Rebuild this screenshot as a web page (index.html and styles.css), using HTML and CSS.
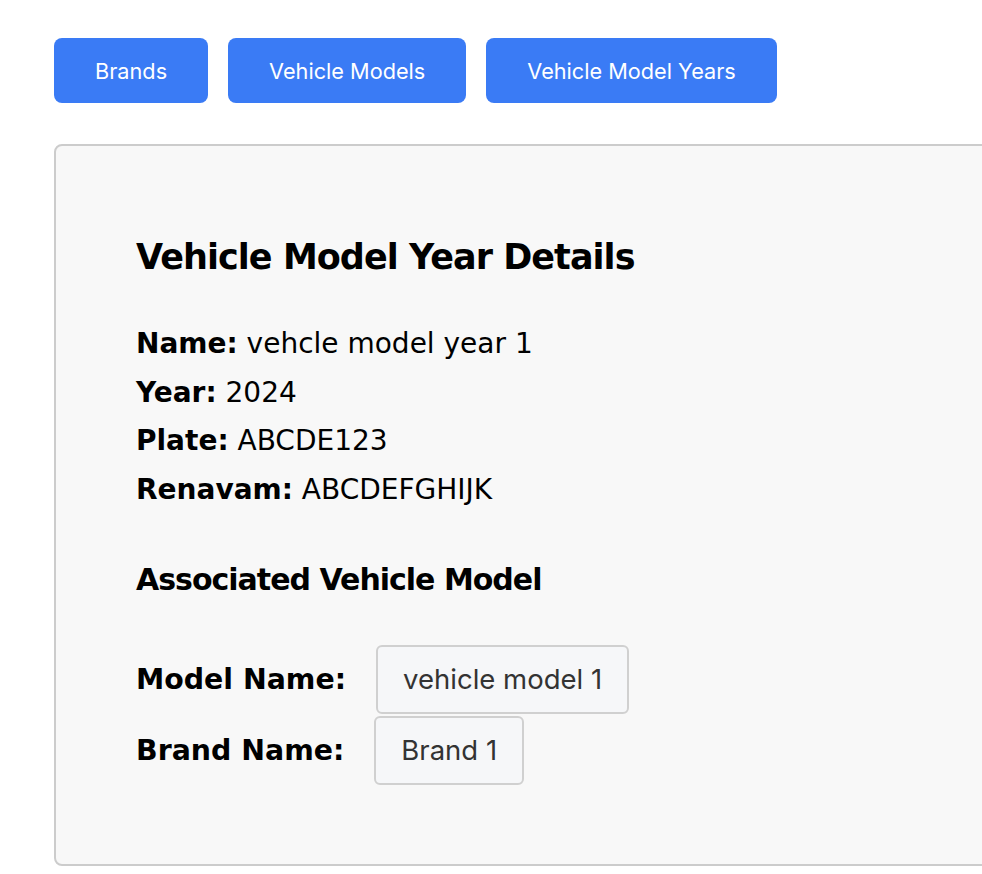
FILE: index.html
```html
<!DOCTYPE html>
<html>
<head>
<meta charset="utf-8">
<link rel="stylesheet" href="styles.css">
</head>
<body>
<nav class="nav">
  <button class="nav-btn">Brands</button>
  <button class="nav-btn">Vehicle Models</button>
  <button class="nav-btn">Vehicle Model Years</button>
</nav>
<section class="card">
  <h2 class="title">Vehicle Model Year Details</h2>
  <div class="fields">
    <div class="field"><b>Name:</b> vehcle model year 1</div>
    <div class="field"><b>Year:</b> 2024</div>
    <div class="field"><b>Plate:</b> ABCDE123</div>
    <div class="field"><b>Renavam:</b> ABCDEFGHIJK</div>
  </div>
  <h3 class="subtitle">Associated Vehicle Model</h3>
  <div class="assoc">
    <div class="assoc-row"><b class="assoc-label">Model Name:</b><span class="chip">vehicle model 1</span></div>
    <div class="assoc-row"><b class="assoc-label">Brand Name:</b><span class="chip">Brand 1</span></div>
  </div>
</section>
</body>
</html>
```
FILE: styles.css
```css
html, body {
  margin: 0;
  background: #ffffff;
  overflow: hidden;
}
body {
  padding: 38px 0 0 54px;
  font-family: "DejaVu Sans", Verdana, sans-serif;
  color: #000;
}
.nav {
  display: flex;
  gap: 20px;
}
.nav-btn {
  height: 65px;
  padding: 0 41px;
  border: none;
  border-radius: 8px;
  background: #3a7bf5;
  color: #fff;
  font-family: Inter, "Noto Sans", sans-serif;
  font-size: 21.7px;
}
.card {
  margin-top: 41px;
  width: 1000px;
  height: 722px;
  box-sizing: border-box;
  border: 2px solid #cccccc;
  border-radius: 8px;
  background: #f8f8f8;
  padding: 91px 0 0 80px;
}
.title {
  margin: 0;
  font-size: 35px;
  line-height: 40px;
  letter-spacing: -0.95px;
  font-weight: bold;
}
.fields {
  margin-top: 43px;
}
.field {
  font-size: 28px;
  line-height: 48.7px;
}
.subtitle {
  margin: 46.7px 0 0;
  font-size: 30px;
  line-height: 36px;
  letter-spacing: -1px;
  font-weight: bold;
}
.assoc {
  margin-top: 47.4px;
  display: flex;
  flex-direction: column;
  gap: 2px;
}
.assoc-row {
  display: flex;
  align-items: center;
  font-size: 28.4px;
}
.assoc-label {
  margin-right: 30px;
}
.chip {
  display: inline-block;
  box-sizing: border-box;
  height: 69px;
  line-height: 65px;
  padding: 0 25px;
  border: 2px solid #d0d0d0;
  border-radius: 6px;
  background: #f6f7f9;
  color: #333;
  font-family: Inter, "Noto Sans", sans-serif;
  font-size: 27.5px;
}
```
